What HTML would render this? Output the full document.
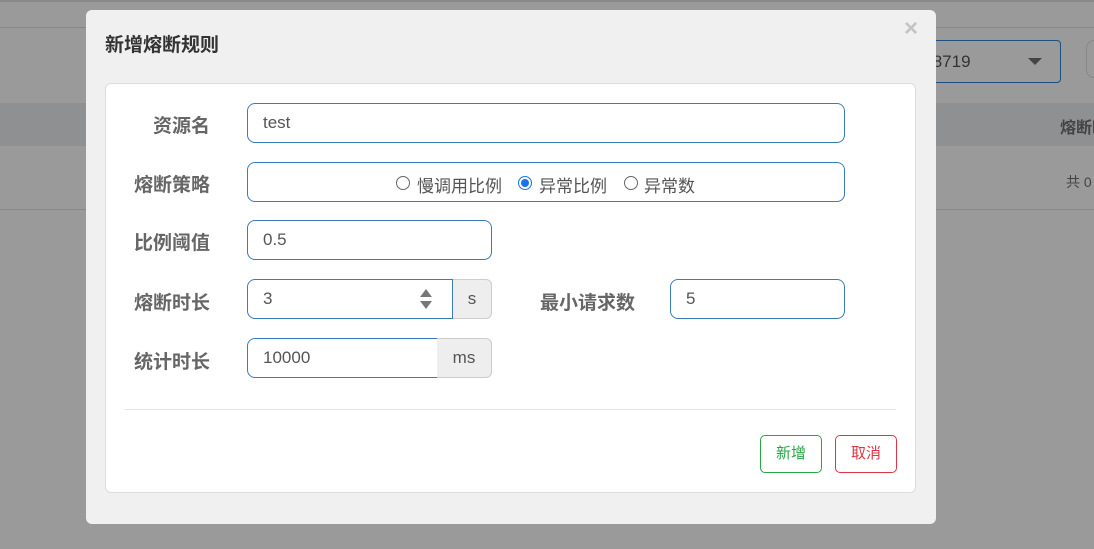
<!DOCTYPE html>
<html><head><meta charset="utf-8">
<style>
*{box-sizing:border-box;margin:0;padding:0}
body{width:1094px;height:549px;overflow:hidden;background:#9a9a9a;font-family:"Liberation Sans","Noto Sans CJK SC",sans-serif;position:relative}
.abs{position:absolute;white-space:nowrap}
.lbl{position:absolute;font-size:19px;font-weight:bold;color:#666;text-align:right;width:120px;left:90px}
.inp{position:absolute;border:1px solid #3a7bbd;border-radius:8px;background:#fff;height:40px;font-size:17px;color:#555;padding-left:15px;line-height:38px}
.addon{position:absolute;background:#eee;border:1px solid #ccc;border-left:none;border-radius:0 6px 6px 0;height:40px;font-size:17px;color:#555;text-align:center;line-height:38px}
.radio{position:absolute;width:14px;height:14px;border:1px solid #666;border-radius:50%;background:#fff;top:176px}
.radio.on{border:1px solid #1a73e8;}
.radio.on:after{content:"";position:absolute;left:2px;top:2px;width:8px;height:8px;border-radius:50%;background:#1a73e8}
.rt{position:absolute;top:172px;font-size:17px;color:#555}
</style></head><body>
<div class="abs" style="left:0;top:0;width:1094px;height:2px;background:#8a8a8a"></div>
<div class="abs" style="left:0;top:27px;width:1094px;height:1px;background:#888"></div>
<div class="abs" style="left:0;top:103px;width:1094px;height:43px;background:#8f9092"></div>
<div class="abs" style="left:0;top:209px;width:1094px;height:1px;background:#888"></div>
<div class="abs" style="left:900px;top:40px;width:161px;height:43px;border:1px solid #1e4f80;border-radius:4px"></div>
<div class="abs" style="left:928px;top:52px;font-size:17px;color:#333">:8719</div>
<div class="abs" style="left:1028px;top:58px;width:0;height:0;border-left:7px solid transparent;border-right:7px solid transparent;border-top:7px solid #444"></div>
<div class="abs" style="left:1086px;top:40px;width:20px;height:38px;border:1px solid #888;border-radius:8px"></div>
<div class="abs" style="left:1060px;top:114px;font-size:16px;font-weight:bold;color:#444">熔断时</div>
<div class="abs" style="left:1066px;top:172px;font-size:14px;color:#444">共 0</div>

<div class="abs" style="left:86px;top:10px;width:850px;height:514px;background:#f0f0f0;border-radius:6px"></div>
<div class="abs" style="left:105px;top:30px;font-size:19px;font-weight:bold;color:#333">新增熔断规则</div>
<div class="abs" style="left:904px;top:15px;font-size:24px;font-weight:bold;color:#c4c4c4">×</div>
<div class="abs" style="left:105px;top:83px;width:811px;height:410px;background:#fff;border:1px solid #ddd;border-radius:6px"></div>

<div class="lbl" style="top:111px">资源名</div>
<div class="inp" style="left:247px;top:103px;width:598px">test</div>

<div class="lbl" style="top:170px">熔断策略</div>
<div class="inp" style="left:247px;top:162px;width:598px"></div>
<span class="radio" style="left:396px"></span><span class="rt" style="left:417px">慢调用比例</span>
<span class="radio on" style="left:518px"></span><span class="rt" style="left:539px">异常比例</span>
<span class="radio" style="left:624px"></span><span class="rt" style="left:644px">异常数</span>

<div class="lbl" style="top:228px">比例阈值</div>
<div class="inp" style="left:247px;top:220px;width:245px">0.5</div>

<div class="lbl" style="top:288px">熔断时长</div>
<div class="inp" style="left:247px;top:279px;width:206px;border-radius:8px 0 0 8px">3</div>
<svg class="abs" style="left:419px;top:289px" width="14" height="20"><path d="M7 0 L13 8 L1 8Z M1 12 L13 12 L7 20Z" fill="#777"/></svg>
<div class="addon" style="left:453px;top:279px;width:39px">s</div>
<div class="abs" style="left:540px;top:288px;font-size:19px;font-weight:bold;color:#666">最小请求数</div>
<div class="inp" style="left:670px;top:279px;width:175px">5</div>

<div class="lbl" style="top:347px">统计时长</div>
<div class="inp" style="left:247px;top:338px;width:191px;border-radius:8px 0 0 8px">10000</div>
<div class="addon" style="left:437px;top:338px;width:55px">ms</div>

<div class="abs" style="left:125px;top:409px;width:771px;height:1px;background:#e5e5e5"></div>
<div class="abs" style="left:760px;top:435px;width:62px;height:38px;border:1px solid #28a745;border-radius:5px;color:#28a745;font-size:15px;text-align:center;line-height:36px">新增</div>
<div class="abs" style="left:835px;top:435px;width:62px;height:38px;border:1px solid #dc3545;border-radius:5px;color:#dc3545;font-size:15px;text-align:center;line-height:36px">取消</div>
</body></html>
